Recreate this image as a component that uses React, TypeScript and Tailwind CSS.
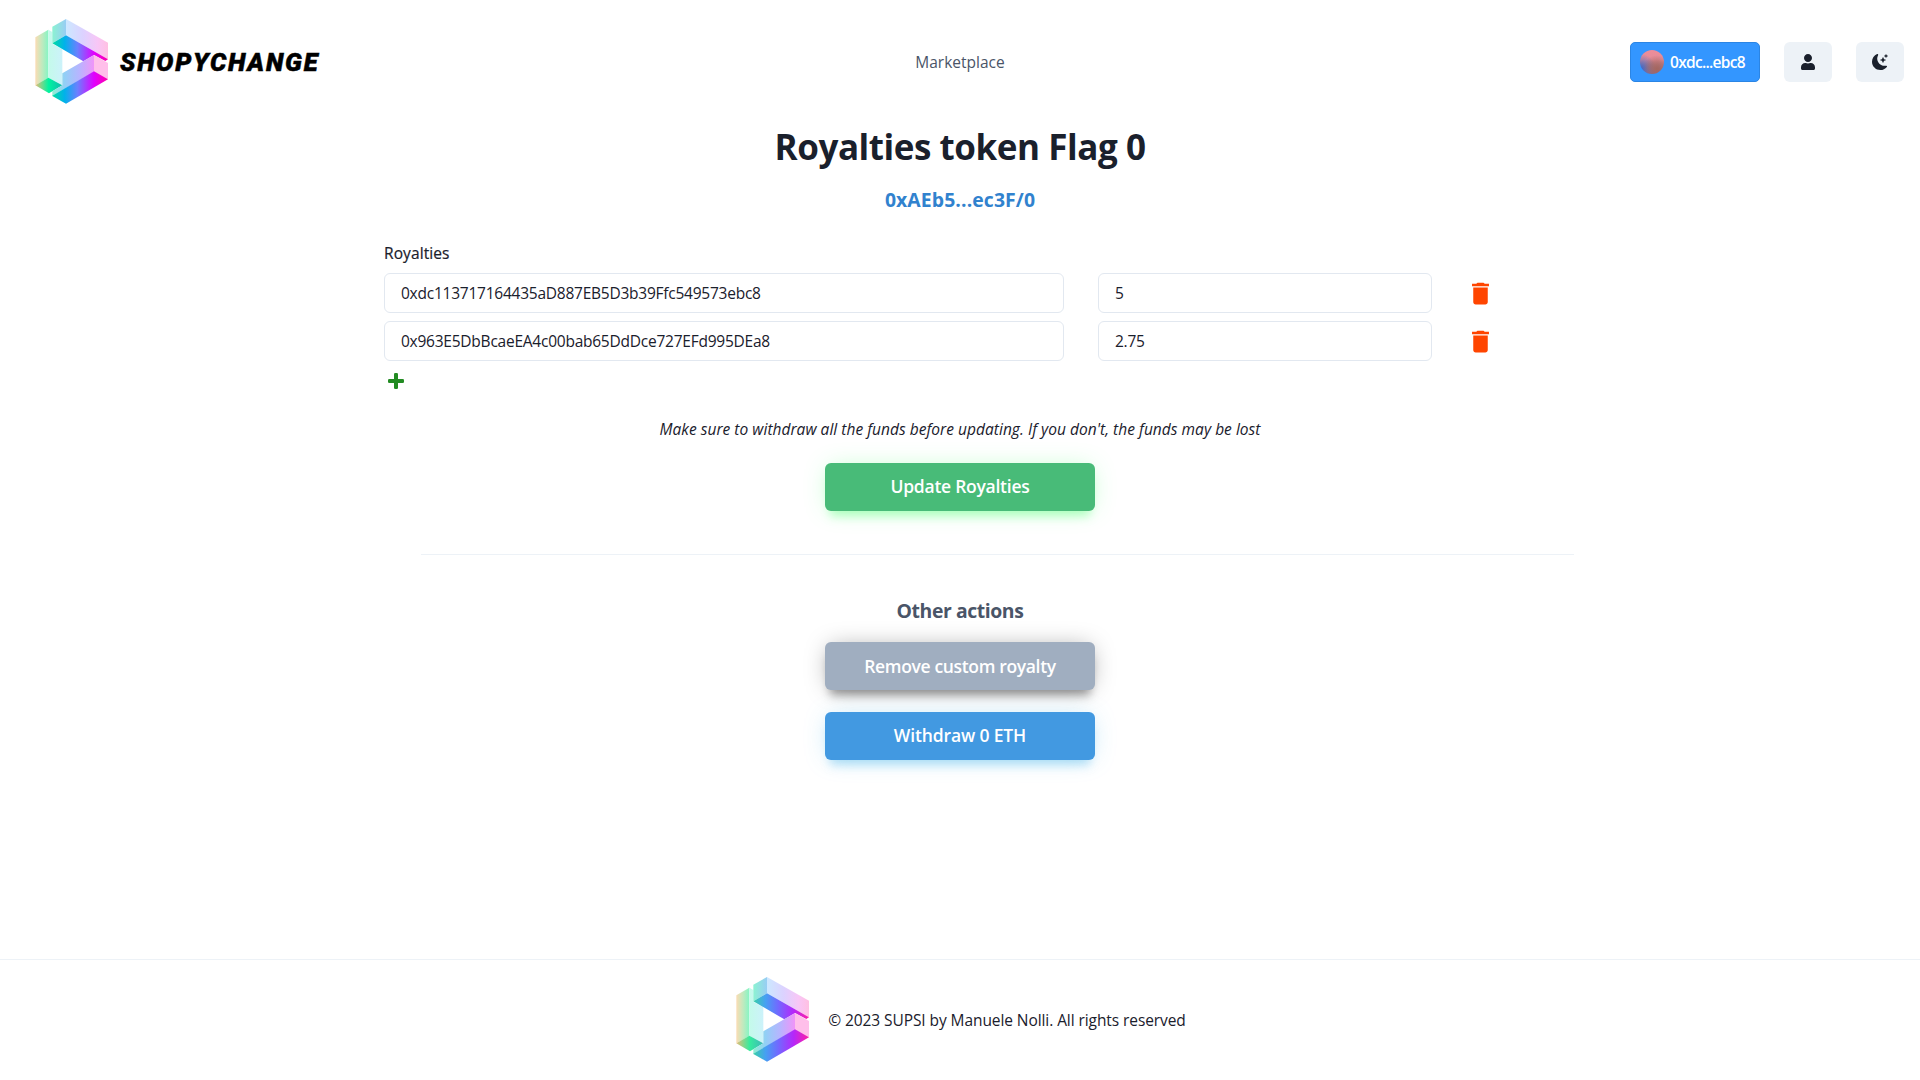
import { useId } from "react";
import type { ReactNode } from "react";
import { BsMoonStarsFill } from "react-icons/bs";
import { FaUser } from "react-icons/fa";
import { MdDelete } from "react-icons/md";

type Stop = [number, string];

const VIVID: Stop[] = [
  [0, "#00dca0"],
  [0.22, "#00b2ea"],
  [0.45, "#6a80ff"],
  [0.75, "#e000ff"],
  [1, "#ff00aa"],
];
const MUTED: Stop[] = [
  [0, "#38d0a8"],
  [0.22, "#46a0f2"],
  [0.45, "#7268ff"],
  [0.72, "#b428fa"],
  [1, "#ff20a4"],
];

function Gradient({ id, x1, x2, stops }: { id: string; x1: number; x2: number; stops: Stop[] }) {
  return (
    <linearGradient id={id} gradientUnits="userSpaceOnUse" x1={x1} x2={x2} y1={0} y2={0}>
      {stops.map(([offset, color]) => (
        <stop key={offset} offset={offset} stopColor={color} />
      ))}
    </linearGradient>
  );
}

function LogoMark({ muted = false }: { muted?: boolean }) {
  const uid = useId().replace(/[^a-zA-Z0-9]/g, "");
  const url = (name: string) => `url(#${uid}${name})`;
  const dark = muted ? MUTED : VIVID;
  return (
    <svg viewBox="0 0 270 285" className="mb-[2px] h-[95px] w-[90px] shrink-0" aria-hidden="true">
      <defs>
        <Gradient id={`${uid}outer`} x1={22} x2={61} stops={[[0, "#fbdcb4"], [0.55, "#bdeabf"], [1, "#86f5c4"]]} />
        <Gradient id={`${uid}inner`} x1={61} x2={102} stops={[[0, "#c4faea"], [1, "#ccf2fa"]]} />
        <Gradient
          id={`${uid}foot`}
          x1={22}
          x2={102}
          stops={[[0, "#e6bc78"], [0.5, muted ? "#36eb9e" : "#00f3a0"], [1, muted ? "#40b8b8" : "#10bcae"]]}
        />
        <Gradient id={`${uid}cap`} x1={73} x2={114} stops={[[0, "#8cf2d2"], [1, "#98cdf4"]]} />
        <Gradient id={`${uid}top`} x1={114} x2={240} stops={[[0, "#cce8ff"], [0.4, "#dcd2ff"], [0.75, "#f8c6f6"], [1, "#ffc0e2"]]} />
        <Gradient id={`${uid}under`} x1={73} x2={240} stops={dark} />
        <Gradient id={`${uid}arm`} x1={73} x2={198} stops={[[0, "#8eeed2"], [0.3, "#92cff6"], [0.65, "#b8b4ff"], [1, "#f094f8"]]} />
      </defs>
      <polygon points="22,70 61,47 61,192 22,214" fill={url("outer")} />
      <polygon points="61,47 73,54 73,89 103,106 103,213 61,192" fill={url("inner")} />
      <polygon points="22,214 61,191 103,214 63,238" fill={url("foot")} />
      <polygon points="73,38 114,15 114,64 73,88" fill={url("cap")} />
      <polygon points="114,15 240,86 240,136 114,64" fill={url("top")} />
      <polygon points="114,63.5 240,135.5 232,141 198,123 166,142 73,88" fill={url("under")} />
      <polygon points="103,178 198,123 198,173 73,246 73,232 103,214" fill={url("arm")} />
      <polygon points="198,123 240,147 240,196 198,173" fill="#ffbfea" />
      <polygon points="73,245 198,172 240,196 114,269 73,246" fill={url("under")} />
    </svg>
  );
}

function PlusIcon() {
  return (
    <svg viewBox="0 0 16 16" className="size-4" fill="currentColor" aria-hidden="true">
      <rect x="0" y="6" width="16" height="4" rx="1.3" />
      <rect x="6" y="0" width="4" height="16" rx="1.3" />
    </svg>
  );
}

function IconButton({ label, children }: { label: string; children: ReactNode }) {
  return (
    <button
      aria-label={label}
      className="flex h-10 w-12 items-center justify-center rounded-md bg-[#edf2f7] text-base text-[#1a202c]"
    >
      {children}
    </button>
  );
}

function Header() {
  return (
    <header className="grid h-[124px] grid-cols-[1fr_auto_1fr] items-center pr-4 pl-7">
      <div className="flex items-center">
        <LogoMark />
        <span className="pt-[2px] pl-[2px] font-['Roboto',sans-serif] text-[25.5px] leading-none font-black tracking-[1.75px] whitespace-nowrap text-black italic [-webkit-text-stroke:0.5px_black]">
          SHOPYCHANGE
        </span>
      </div>
      <a className="-ml-3 pt-[2px] text-[15.5px] font-medium text-[#4a5568]">Marketplace</a>
      <div className="flex items-center justify-end gap-6">
        <button className="flex h-10 w-[130px] items-center gap-1.5 rounded-[5px] border border-[#2b85e4] bg-[#3396ff] pl-[9px] text-white">
          <span className="size-6 shrink-0 rounded-full bg-[radial-gradient(circle_at_70%_80%,#a5665e_0%,#a5665e88_30%,transparent_55%),radial-gradient(circle_at_5%_78%,#3f68c8_0%,#5a70bd88_28%,transparent_50%),linear-gradient(to_bottom,#ee8d9a_0%,#e58c98_40%,#a87888_75%,#7a6ca8_100%)]" />
          <span className="pt-px text-[15.5px] font-semibold tracking-[-0.7px]">0xdc...ebc8</span>
        </button>
        <IconButton label="Profile">
          <FaUser />
        </IconButton>
        <IconButton label="Toggle color mode">
          <BsMoonStarsFill />
        </IconButton>
      </div>
    </header>
  );
}

const FIELD =
  "h-10 rounded-md border border-[#e2e8f0] bg-white px-4 text-[15.5px] tracking-[-0.24px] text-[#1a202c] outline-none";

function RoyaltyRow({ address, share }: { address: string; share: string }) {
  return (
    <div className="flex items-center">
      <input readOnly value={address} className={`${FIELD} w-[680px]`} />
      <input readOnly value={share} className={`${FIELD} ml-[34px] w-[334px]`} />
      <button aria-label="Remove" className="ml-[34px] text-[29px] text-[#ff4500]">
        <MdDelete />
      </button>
    </div>
  );
}

const ACTION =
  "flex h-12 w-[270px] items-center justify-center rounded-md text-[17.5px] font-semibold text-white whitespace-nowrap";

export default function App() {
  return (
    <div className="flex h-[1080px] w-full flex-col overflow-hidden bg-white font-['Open_Sans',sans-serif] text-[#1a202c]">
      <Header />
      <main className="flex flex-1 flex-col items-center">
        <h1 className="mt-px h-11 text-[35px] leading-11 font-bold tracking-[-0.45px]">Royalties token Flag 0</h1>
        <a className="mt-[19px] h-6 text-[19.4px] leading-6 font-bold tracking-[0.1px] text-[#3182ce]">0xAEb5...ec3F/0</a>
        <section className="mt-[29px] w-[1152px]">
          <h2 className="h-6 text-[15.5px] leading-6 font-medium tracking-[0.1px] [-webkit-text-stroke:0.2px_currentColor]">
            Royalties
          </h2>
          <div className="mt-2 flex flex-col gap-2">
            <RoyaltyRow address="0xdc113717164435aD887EB5D3b39Ffc549573ebc8" share="5" />
            <RoyaltyRow address="0x963E5DbBcaeEA4c00bab65DdDce727EFd995DEa8" share="2.75" />
          </div>
          <button aria-label="Add royalty" className="mt-3 ml-1 block text-[#228b22]">
            <PlusIcon />
          </button>
        </section>
        <p className="mt-7 h-6 text-[15.5px] leading-6 tracking-[0.03px] italic">
          Make sure to withdraw all the funds before updating. If you don't, the funds may be lost
        </p>
        <button
          className={`${ACTION} mt-[22px] bg-[#48bb78] pb-px tracking-[-0.26px] shadow-[0px_1px_25px_-5px_rgb(66_255_105/38%),0_10px_10px_-5px_rgb(66_255_105/34%)]`}
        >
          Update Royalties
        </button>
        <hr className="mt-[43px] ml-[75px] w-[1153px] border-[#edf2f7]" />
        <h3 className="mt-11 h-6 text-[19.4px] leading-6 font-bold tracking-[-0.42px] text-[#4a5568]">
          Other actions
        </h3>
        <button
          className={`${ACTION} mt-[19px] bg-[#a0aec0] tracking-[-0.34px] shadow-[0px_1px_25px_-5px_rgb(0_0_0/38%),0_10px_10px_-5px_rgb(0_0_0/34%)]`}
        >
          Remove custom royalty
        </button>
        <button
          className={`${ACTION} mt-[22px] bg-[#4299e1] pb-px tracking-[-0.14px] shadow-[0px_1px_25px_-5px_rgb(66_180_235/38%),0_10px_10px_-5px_rgb(66_180_235/34%)]`}
        >
          Withdraw 0 ETH
        </button>
      </main>
      <footer className="flex h-[121px] items-center justify-center border-t border-[#edf2f7] pr-[5px]">
        <LogoMark muted />
        <p className="ml-[9px] pt-px text-[15.5px] tracking-[-0.08px]">© 2023 SUPSI by Manuele Nolli. All rights reserved</p>
      </footer>
    </div>
  );
}
